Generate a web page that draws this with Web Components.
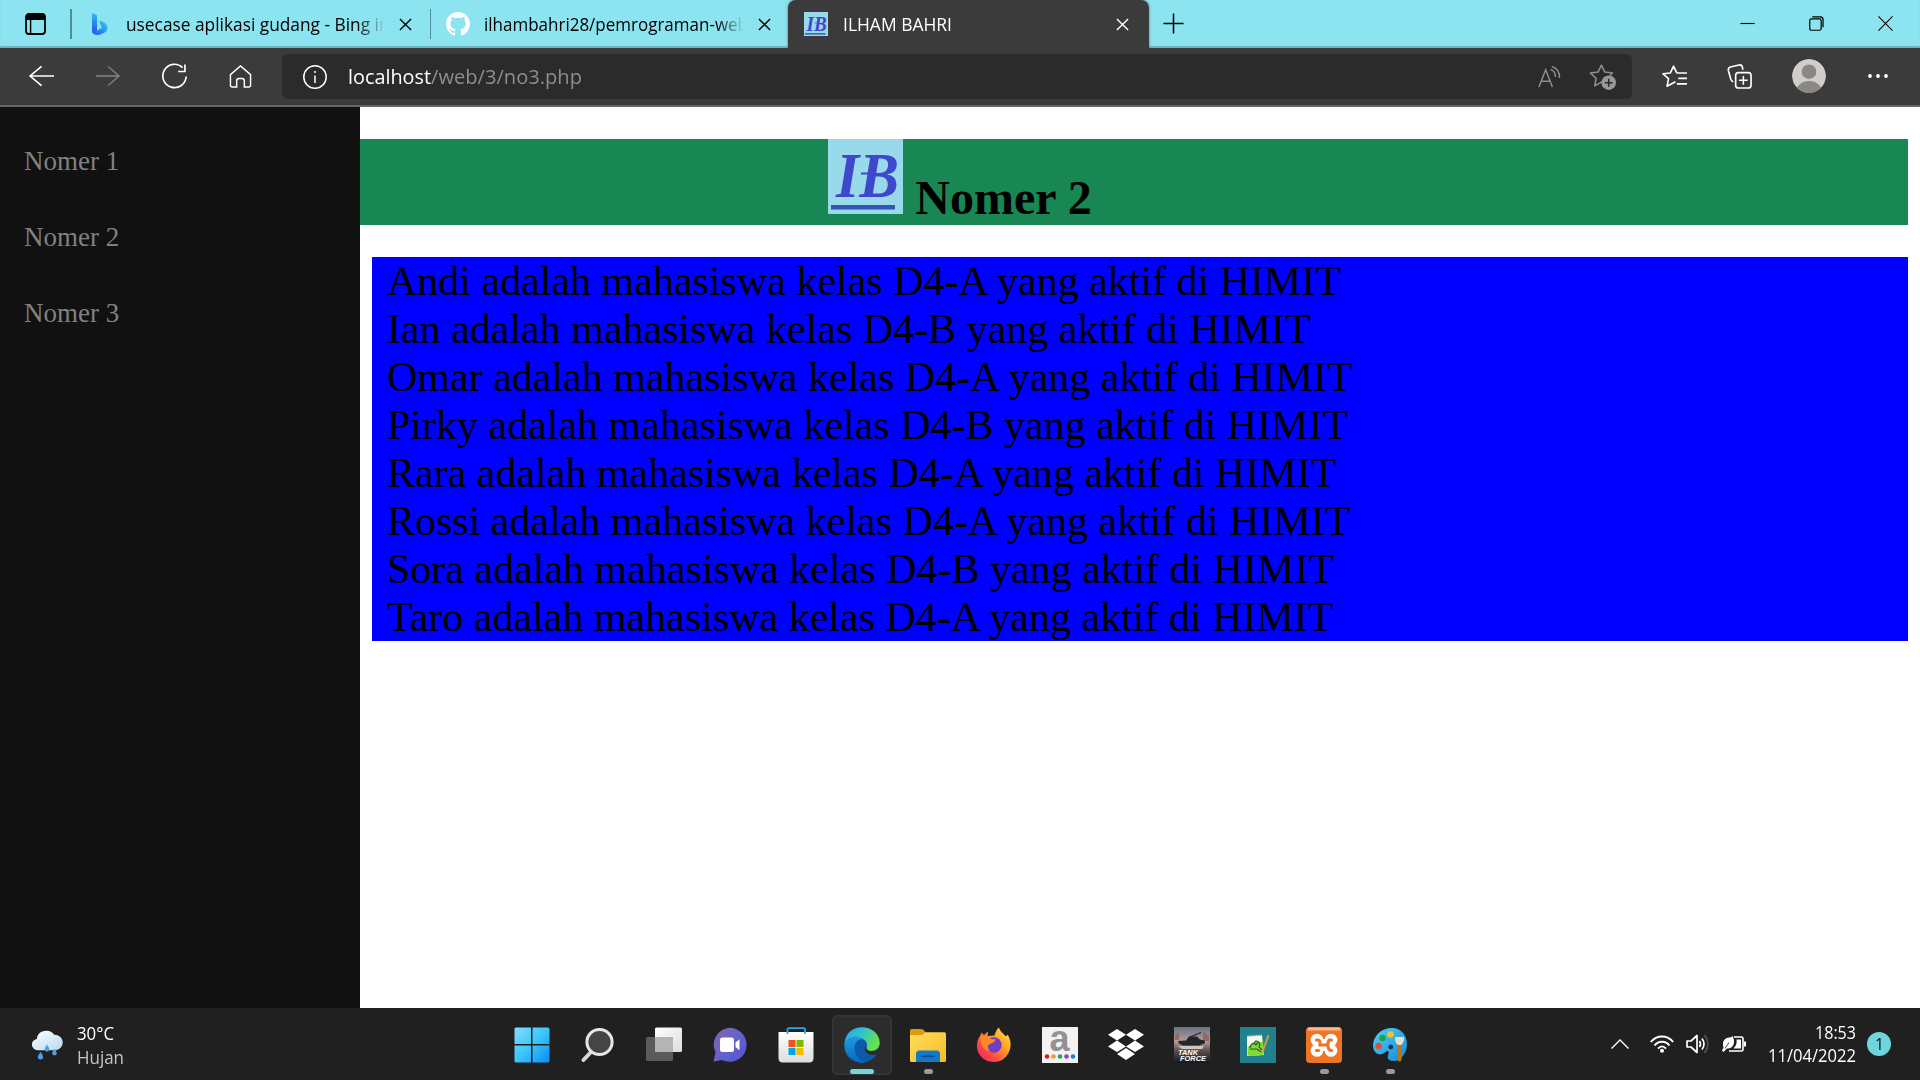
<!DOCTYPE html>
<html lang="id">
<head>
<meta charset="utf-8">
<title>ILHAM BAHRI</title>
<style>
html,body{margin:0;height:100%;overflow:hidden;background:#fff}
body{font-family:"Liberation Serif",serif}
</style>
</head>
<body>
<desktop-screen></desktop-screen>
<script>
const UI = 'font-family:"Open Sans","Noto Sans",sans-serif;';
const define = (name, html, ready) => {
  const t = document.createElement('template');
  t.innerHTML = html;
  customElements.define(name, class extends HTMLElement {
    constructor() { super(); this.attachShadow({mode: 'open'}).append(t.content.cloneNode(true)); }
    connectedCallback() { if (ready) ready(this, this.shadowRoot); }
  });
};

/* Text squeezed to a set width, keeping its height */
define('fit-text', `<style>:host{display:block;white-space:nowrap;${UI}}
span{display:inline-block;transform-origin:0 50%}</style><span><slot></slot></span>`, (el, root) => {
  const w = +el.getAttribute('w');
  el.style.width = w + 'px';
  const s = root.querySelector('span');
  s.style.transform = `scaleX(${w / s.getBoundingClientRect().width})`;
});

/* Line and colour icons */
const ICONS = {
  workspaces: ['0 0 24 24', '<rect x="3" y="2" width="19" height="20" rx="3" fill="none" stroke="#000" stroke-width="1.8"/><path d="M3 8V5q0-3 3-3h13q3 0 3 3v3z"/><path d="M7.6 8v14" stroke="#000" stroke-width="1.4"/>'],
  bing: ['0 0 24 24', '<defs><linearGradient id="a" x2="0" y2="1"><stop stop-color="#35b8f5"/><stop offset="1" stop-color="#2255e8"/></linearGradient><linearGradient id="b" x1="1" x2="0" y2="1"><stop stop-color="#32d3e8"/><stop offset="1" stop-color="#2058ea"/></linearGradient></defs><path d="M3 1l4 1.600q1 .5 1 1.600v14.500l-5 2z" fill="url(#a)"/><path d="M10.500 8.500c4 1 8 3 8 7.500 0 3.500-3.500 5-7 6.500-4 1.500-8.500 0-8.500-4 2 1.500 4.500 .5 6.500-.7l3.400-2-2-4.300z" fill="url(#b)"/>'],
  github: ['0 0 16 16', '<path fill="#fff" d="M8 0C3.580 0 0 3.580 0 8c0 3.540 2.290 6.530 5.470 7.590.4.070.55-.17.55-.38 0-.19-.01-.82-.01-1.490-2.010.37-2.530-.49-2.690-.94-.09-.23-.48-.94-.82-1.130-.28-.15-.68-.52-.01-.53.63-.01 1.080.58 1.230.82.72 1.210 1.870.87 2.330.66.070-.52.28-.87.51-1.070-1.780-.2-3.640-.89-3.640-3.950 0-.87.31-1.590.82-2.150-.08-.2-.36-1.020.08-2.120 0 0 .67-.21 2.200.82a7.400 7.400 0 0 1 4 0c1.530-1.040 2.200-.82 2.200-.82.44 1.100.16 1.920.08 2.120.51.56.82 1.270.82 2.150 0 3.070-1.870 3.750-3.650 3.950.29.25.54.73.54 1.480 0 1.070-.01 1.930-.01 2.200 0 .21.15.46.55.38A8.010 8.010 0 0 0 16 8c0-4.420-3.580-8-8-8z"/>'],
  close: ['0 0 14 14', '<path d="M1 1l12 12M13 1L1 13" stroke="currentColor" stroke-width="1.500"/>'],
  plus: ['0 0 22 22', '<path d="M11 .5v21M.5 11h21" stroke="#000" stroke-width="1.600"/>'],
  minimize: ['0 0 16 16', '<path d="M.5 8h15" stroke="#000" stroke-width="1.200"/>'],
  restore: ['0 0 16 16', '<rect x=".8" y="3" width="12.200" height="12.200" rx="2" fill="none" stroke="#000" stroke-width="1.300"/><path d="M3.500 1h8.500q3 0 3 3v8" fill="none" stroke="#000" stroke-width="1.300"/>'],
  winclose: ['0 0 16 16', '<path d="M.5 .5l15 15M15.500 .5l-15 15" stroke="#000" stroke-width="1.100"/>'],
  back: ['0 0 24 24', '<path d="M24 12H1M12 1.500L1 12l11 10.500" fill="none" stroke="#fff" stroke-width="1.600"/>'],
  forward: ['0 0 24 24', '<path d="M0 12h23M12 1.500L23 12 12 22.500" fill="none" stroke="#858585" stroke-width="1.500"/>'],
  reload: ['0 0 24 24', '<path d="M19.800 3.400A11.200 11.200 0 1 0 23.200 12M22 .5v6.700h-6.500" fill="none" stroke="#fff" stroke-width="1.600"/>'],
  home: ['0 0 24 24', '<path d="M1.500 10L12 1l10.500 9v11.500q0 1.500-1.500 1.500h-5v-6.500q0-2.500-2.500-2.500h-3q-2.500 0-2.500 2.500V23H3q-1.500 0-1.500-1.500z" fill="none" stroke="#fff" stroke-width="1.500"/>'],
  info: ['0 0 24 24', '<circle cx="12" cy="12" r="11.200" fill="none" stroke="#fff" stroke-width="1.500"/><path d="M12 10.500V18" stroke="#fff" stroke-width="1.500"/><circle cx="12" cy="7" r="1"  fill="#fff"/>'],
  read: ['0 0 24 24', '<path d="M1 23L8 5l7 18M3.500 17h9M13 4.500c3 1 5.200 4 5.300 8M14.500 1.500c5 1.500 8 6 8 12" fill="none" stroke="#8f8f8f" stroke-width="1.500"/>'],
  staradd: ['0 0 26 26', '<path d="M14 19.500L12 18.400 5.500 22l1.300-7.300L1.300 9.600l7.400-.9L12 2l3.300 6.700 7.400.9-2.500 2.400" fill="none" stroke="#8f8f8f" stroke-width="1.500" stroke-linejoin="round"/><circle cx="19" cy="19" r="7" fill="#999"/><path d="M19 15.200v7.600M15.200 19h7.600" stroke="#2b2b2b" stroke-width="1.500"/>'],
  favs: ['0 0 26 26', '<path d="M15.300 9.300l-3.300-7-3.300 7-7.600.9 5.700 5.100-1.500 7.800L12 19.500l2-1" fill="none" stroke="#fff" stroke-width="1.700" stroke-linejoin="round"/><path d="M15 9.300H26M17 15h9M15.500 20.600H26" stroke="#fff" stroke-width="1.700"/>'],
  collections: ['0 0 26 26', '<rect x="9" y="9" width="16" height="16" rx="3" fill="none" stroke="#fff" stroke-width="1.700"/><path d="M17 12.500v9M12.500 17h9" stroke="#fff" stroke-width="1.600"/><path d="M6.500 18.500q-2-.7-2.500-2.500L1.500 7q-.7-3 2-3.800L12.500 1q3-.5 3.500 2.300l.5 2.700" fill="none" stroke="#fff" stroke-width="1.700"/>'],
  avatar: ['0 0 34 34', '<clipPath id="c"><circle cx="17" cy="17" r="17"/></clipPath><g clip-path="url(#c)"><circle cx="17" cy="17" r="17" fill="#d0cecb"/><circle cx="17" cy="12.700" r="7.300" fill="#8b8785"/><ellipse cx="17" cy="33" rx="13" ry="11" fill="#8b8785"/></g>'],
  dots: ['0 0 20 4', '<g fill="#fff"><circle cx="2" cy="2" r="1.900"/><circle cx="10" cy="2" r="1.900"/><circle cx="18" cy="2" r="1.900"/></g>'],
  weather: ['0 0 32 32', '<defs><linearGradient id="w" x2="1" y2="1"><stop stop-color="#fff"/><stop offset="1" stop-color="#b5d9f2"/></linearGradient></defs><path d="M6.500 21.500a6 6 0 0 1-.7-11.900 9.500 9.500 0 0 1 17.400-4.500 8.200 8.200 0 0 1 .8 16.400z" fill="url(#w)"/><path d="M9.500 23.500c-4 5-3 8 0 8s4-3 0-8M16 15.500c-3.500 5-2.500 7.500 0 7.500s3.500-2.500 0-7.500M23.500 20c-3.500 4.500-2.500 7 0 7s3.500-2.500 0-7" fill="#4e9fe8"/>'],
  start: ['0 0 36 36', '<defs><linearGradient id="s" x2="1" y2="1"><stop stop-color="#86dcff"/><stop offset=".5" stop-color="#3cc5fb"/><stop offset="1" stop-color="#0a8cf5"/></linearGradient></defs><path d="M2 .5h15v16.500H.5V2Q.5.5 2 .5M18.500.5H34q1.500 0 1.500 1.500v15h-17zM.5 18.500H17v17H2Q.5 35.500.5 34zM18.500 18.500h17V34q0 1.500-1.500 1.500H18.500z" fill="url(#s)"/>'],
  search: ['0 0 36 36', '<path d="M11 25l-7.500 8" stroke="#d8d8d8" stroke-width="4" stroke-linecap="round"/><circle cx="19.500" cy="15" r="12.600" fill="#454545" stroke="#e6e6e6" stroke-width="3"/>'],
  taskview: ['0 0 36 36', '<defs><linearGradient id="t" x2="1" y2="1"><stop stop-color="#fff"/><stop offset="1" stop-color="#dcdcdc"/></linearGradient></defs><rect x="9" y=".5" width="27" height="24.500" rx="1.500" fill="url(#t)"/><rect y="10" width="27" height="24" rx="1.500" fill="#5b5b5b"/><path d="M9 10h16.500q1.500 0 1.500 1.500V25H9z" fill="#b4b4b4"/>'],
  chat: ['0 0 36 36', '<defs><linearGradient id="h" x2="1" y2="1"><stop stop-color="#8b62a8"/><stop offset=".5" stop-color="#6462cd"/><stop offset="1" stop-color="#5255d2"/></linearGradient></defs><path d="M18 .8A17 17 0 1 1 10 33l-8.500 1.500 2-9A17 17 0 0 1 18 .8" fill="url(#h)"/><rect x="8" y="10.500" width="14" height="14.500" rx="2.500" fill="#fff"/><path d="M23.500 15.500l4-3.300v11l-4-3.300z" fill="#fff"/>'],
  store: ['0 0 36 36', '<defs><linearGradient id="m" x2="0" y2="1"><stop stop-color="#fff"/><stop offset="1" stop-color="#ddd"/></linearGradient></defs><path d="M.5 5h35v26q0 4.500-4.500 4.500H5Q.5 35.500.5 31z" fill="url(#m)"/><path d="M9.500 7V2.500Q9.500 1.200 11 1.200h14.500q1.500 0 1.500 1.300V7" fill="none" stroke="#28a8ea" stroke-width="1.800"/><path d="M10.500 13h7v7h-7z" fill="#f1511b"/><path d="M18.500 13h7v7h-7z" fill="#80b900"/><path d="M10.500 21h7v7h-7z" fill="#00a4ef"/><path d="M18.500 21h7v7h-7z" fill="#fbb900"/>'],
  edge: ['0 0 36 36', '<defs><linearGradient id="e" x1="0" x2="1" y2=".4"><stop stop-color="#25a9e8"/><stop offset=".5" stop-color="#2fc3d0"/><stop offset="1" stop-color="#68e14d"/></linearGradient><linearGradient id="f" x2="0" y2="1"><stop stop-color="#1b9de2"/><stop offset="1" stop-color="#0967c4"/></linearGradient></defs><circle cx="18" cy="18" r="17.500" fill="#0d5aa8"/><path d="M.5 16C2 5.500 9 .3 18 .3c10 0 17.700 7 17.700 15.300 0 5.500-4 8.500-8.500 8.500-3.500 0-6-1.500-5-3 2.500-3.500 0-9-6-9.800C9 10.500 2.500 12 .5 16" fill="url(#e)"/><path d="M.5 15.500C3.500 9 13 7.500 19 12c-6 0-9 4.500-8.500 10.500C11 28.500 15 33.500 21.500 35.500 9 37.500-.8 28 .5 15.500" fill="url(#f)"/><path d="M36 20v9l-2.300-1.800c-2 1-7 1.300-10-.7-3-1.800-3.800-4.500-1.800-7.500 0 3 2.500 5 6 5 3 0 6-1.500 8.100-4" fill="#2c2c2c"/>'],
  explorer: ['0 0 36 36', '<defs><linearGradient id="x" x2="1" y2="1"><stop stop-color="#ffdc5e"/><stop offset="1" stop-color="#f7bd23"/></linearGradient></defs><path d="M0 12V3.500Q0 2 1.500 2H11q1.500 0 2.500 1l2 2v7z" fill="#d99a0c"/><path d="M0 8h11q1.500 0 2.500-1l1.500-1.800h19.500Q36 5.200 36 7v27q0 1-1.500 1h-33Q0 35 0 34z" fill="url(#x)"/><path d="M6 35v-8q0-3.500 3.500-3.500h17Q30 23.500 30 27v8z" fill="#1278c8"/><path d="M11 29.200h14" stroke="#06498a" stroke-width="1.500"/>'],
  firefox: ['0 0 36 36', '<defs><linearGradient id="r" x1="1" x2="0" y2="1"><stop stop-color="#fff04a"/><stop offset=".4" stop-color="#ff9b22"/><stop offset=".7" stop-color="#ff4745"/><stop offset="1" stop-color="#e91a75"/></linearGradient></defs><path d="M4 9l1.500-3.500L8 8l4-3.500-.5 4.500 7-.5c1-4 3-7 4.500-8 1 4 4 5.500 6.500 8.500 1 .5 2-1 2-1.500 4 6 4 13 1 18.500A17 17 0 0 1 2 25C0 19 1 13 4 9" fill="url(#r)"/><circle cx="18" cy="18" r="7.700" fill="#743dc6"/><path d="M4.500 10c3-1.500 6-1 8 1 2 1.500 5 1 7 1.500-1 3.500-4 3.500-6.500 5-2 1.500-1 4.500 1 6.500-6 0-10-6-9.500-14" fill="#ff8a27"/>'],
  letter: ['0 0 36 36', '<path d="M0 0h36v36H0z" fill="#f2f2f2"/><text x="7.500" y="23.500" font-family="Liberation Sans,sans-serif" font-weight="bold" font-size="36" fill="#929292">a</text><circle cx="5" cy="29.500" r="2.300" fill="#e01920"/><circle cx="11.500" cy="29.500" r="2.300" fill="#f19a24"/><circle cx="18" cy="29.500" r="2.300" fill="#22a75a"/><circle cx="24.500" cy="29.500" r="2.300" fill="#8843c7"/><circle cx="31" cy="29.500" r="2.300" fill="#1980cd"/>'],
  dropbox: ['0 0 36 36', '<path fill="#fff" d="M9 2l9 5.800-9 5.800-9-5.800zM27 2l9 5.800-9 5.800-9-5.800zM9 13.600l9 5.800-9 5.600-9-5.600zM27 13.600l9 5.800-9 5.600-9-5.600zM18 21l9 6-9 6-9-6z"/>'],
  tank: ['0 0 36 36', '<defs><linearGradient id="k" x2="0" y2="1"><stop stop-color="#677487"/><stop offset=".4" stop-color="#b69c94"/><stop offset=".65" stop-color="#5a5254"/><stop offset="1" stop-color="#16171b"/></linearGradient></defs><path d="M0 0h36v36H0z" fill="url(#k)"/><path d="M1 8l4-3v8H1zM29 4l6 5v6l-6-2z" fill="#8f6a68"/><path d="M4 14l8-.5 3-4h8l3 3 5 1v2.500l-6 2.500H9l-4-2z" fill="#21272d"/><path d="M16 10L27 5.500" stroke="#21272d" stroke-width="1.300"/><path d="M4 19h26l-2 3H8z" fill="#d0c4bd"/><g fill="#fff" font-family="Liberation Sans,sans-serif" font-weight="bold" font-style="italic" font-size="7"><text x="4" y="28" textLength="20" lengthAdjust="spacingAndGlyphs">TANK</text><text x="6" y="34" textLength="26" lengthAdjust="spacingAndGlyphs">FORCE</text></g>'],
  notepad: ['0 0 36 36', '<path d="M0 0h36v36H0z" fill="#21818d"/><path d="M7 9l15-1 2 20-17 1z" fill="#f4f8ee"/><path d="M7.500 20q8-6 15.500-5l1 12.500q-8 2-16.500 1z" fill="#83d936"/><path d="M7 9l15-1" stroke="#999" stroke-width="1.500" stroke-dasharray="1.500 1"/><path d="M10 21c1-5 4-6 6-3 2-5 5-1 3 2l3 3M10 22h7l4 3M13 17l3-3 3 1" fill="none" stroke="#2d5b25" stroke-width="1.200"/><path d="M28.500 8l-6 17" stroke="#dd9a38" stroke-width="2"/>'],
  xampp: ['0 0 36 36', '<rect width="36" height="36" rx="4" fill="#ef7526"/><path d="M3 .5h30q1.500 0 1.500 3h-33q0-3 1.500-3" fill="#ffb68a"/><g fill="#fff"><circle cx="11" cy="13" r="6.300"/><circle cx="25" cy="13" r="6.300"/><circle cx="11" cy="23.500" r="6.300"/><circle cx="25" cy="23.500" r="6.300"/><path d="M9 12h18v12H9z"/></g><path d="M18 6v5.500M18 25v5.500" stroke="#ef7526" stroke-width="2"/><g fill="none" stroke="#ef7526" stroke-width="3.200" stroke-linecap="round"><path d="M10.500 13h1.500q2.500 0 2 5h8M25.500 13h-2q-2 2-1.500 5M25.500 23.500q-3.500 0-3.500-5M10.500 23.500h2"/></g>'],
  paint: ['0 0 36 36', '<defs><linearGradient id="p" x2="1" y2="1"><stop stop-color="#4fd0fa"/><stop offset="1" stop-color="#1587d8"/></linearGradient></defs><path d="M1 19C1 9 9 1 20 1c9 0 15 7 15 16 0 10-7 17-13 17-7 0-7-4-5.500-7 1-3-1-4-3-2-3 3-7 3-9.500 1Q1 23 1 19" fill="url(#p)"/><circle cx="18.800" cy="20" r="2.400" fill="#16334a"/><circle cx="6.500" cy="19" r="3.200" fill="#dc5035"/><circle cx="10.500" cy="11" r="3.200" fill="#28a038"/><circle cx="18.500" cy="7.500" r="3.200" fill="#f8c31f"/><path d="M25.500 17h4v16q-2 3-4 0z" fill="#b97518"/><path d="M23 10h9v3q-1 4-3 5h-3q-2-1-3-5z" fill="#eadcc5"/>'],
  up: ['0 0 18 10', '<path d="M.5 9.500L9 1l8.500 8.500" fill="none" stroke="#fff" stroke-width="1.400"/>'],
  wifi: ['0 0 24 18', '<path d="M.8 7c6-7.300 16.400-7.300 22.400 0M4.500 10.500c4-5 11-5 15 0M8 13.600c2.500-3 5.500-3 8 0" fill="none" stroke="#fff" stroke-width="1.900"/><circle cx="12" cy="15.700" r="2" fill="#fff"/>'],
  volume: ['0 0 24 20', '<path d="M1 7h4l6-5.500v17L5 13H1z" fill="none" stroke="#fff" stroke-width="1.700" stroke-linejoin="round"/><path d="M13.500 7q2 3 0 6M16 4.500q4 5.500 0 11" fill="none" stroke="#fff" stroke-width="1.700"/><path d="M18.500 1q7 9 0 18" fill="none" stroke="#555" stroke-width="1.600"/>'],
  battery: ['0 0 24 18', '<path d="M12 2h7.500q1.500 0 1.500 2v10q0 2-1.500 2H7" fill="none" stroke="#fff" stroke-width="1.600"/><path d="M22 6.500h2v5h-2zM14.500 4.500H19v9h-7.500q4-4 3-9" fill="#fff"/><path d="M10.500 1c3 5 2 13-5.500 12.500L1.500 17 0 15.500l1.500-3C-.5 6 3.500 2.500 7 2.500q2 0 3.500-1.500" fill="#fff"/><path d="M3 13.500L7 7.500" stroke="#202020" stroke-width=".8"/>']
};
define('app-icon', `<style>:host{display:block;flex:none}svg{display:block;width:100%;height:100%;overflow:visible}</style>`, (el, root) => {
  const [box, art] = ICONS[el.getAttribute('name')];
  const w = el.getAttribute('w'), h = el.getAttribute('h') || w;
  el.style.width = w + 'px'; el.style.height = h + 'px';
  root.innerHTML += `<svg viewBox="${box}" preserveAspectRatio="none">${art}</svg>`;
});

/* IB logo */
define('ib-logo', `<style>:host{display:inline-block}svg{display:block;width:100%;height:100%}</style>
<svg viewBox="0 0 75 75"><path d="M0 0h75v75H0z" fill="#98d9ea"/>
<text x="8" y="58" textLength="63" lengthAdjust="spacingAndGlyphs" font-family="Liberation Serif,serif" font-weight="bold" font-style="italic" font-size="64" fill="#3f48cc">IB</text>
<path d="M33 34.500h16" stroke="#3f48cc" stroke-width="2"/><path d="M3 68.300h64" stroke="#3455b4" stroke-width="4.500"/></svg>`);

define('browser-tab', `<style>
:host{display:flex;align-items:center;box-sizing:border-box;height:48px;color:#000;font-size:18px;line-height:24px;flex:none}
.t{flex:1;overflow:hidden;min-width:0}
:host([fade]) .t{-webkit-mask-image:linear-gradient(90deg,#000 calc(100% - 28px),transparent);mask-image:linear-gradient(90deg,#000 calc(100% - 28px),transparent)}
:host([active]){background:#3b3b3b;color:#fff;border-radius:8px 8px 0 0;box-shadow:0 0 3px #2228}
app-icon{margin-top:1px}
</style><slot name="icon"></slot><div class="t"><slot></slot></div><app-icon name="close" w="13"></app-icon>`);

define('tab-strip', `<style>
:host{display:flex;height:48px;background:#8ce4f0;align-items:center;box-shadow:inset 0 -2px 1px #6db3bc}
.ws{padding:0 23px 0 23px}.sep{width:1.500px;height:30px;background:#4f8e98;flex:none}
.a{width:358px;padding:0 18px 1px 17px}.b{width:357px;padding:0 17px 1px 15px}.c{width:361px;padding:0 20px 1px 16px}
.a [slot]{margin-right:13px}.b [slot]{margin-right:14px}.c ib-logo{width:24px;height:24px;margin-right:15px}
.n{margin:0 0 2px 14px}.s{flex:1}.win{display:flex;align-items:center;gap:54px;padding:0 27px 1px 0}
.a,.b{--gap:14px}
</style>
<app-icon class="ws" name="workspaces" w="24"></app-icon><div class="sep"></div>
<browser-tab class="a" fade><app-icon slot="icon" name="bing" w="24"></app-icon><fit-text w="306">usecase aplikasi gudang - Bing images</fit-text></browser-tab>
<div class="sep"></div>
<browser-tab class="b" fade><app-icon slot="icon" name="github" w="24"></app-icon><fit-text w="264">ilhambahri28/pemrograman-web</fit-text></browser-tab>
<browser-tab class="c" active><ib-logo slot="icon"></ib-logo><fit-text w="109">ILHAM BAHRI</fit-text></browser-tab>
<app-icon class="n" name="plus" w="21"></app-icon><div class="s"></div>
<div class="win"><app-icon name="minimize" w="15"></app-icon><app-icon name="restore" w="15"></app-icon><app-icon name="winclose" w="15"></app-icon></div>`, (el, root) => {
  for (const tab of root.querySelectorAll('[fade]')) tab.shadowRoot.querySelector('.t').style.marginRight = '14px';
});

define('tool-bar', `<style>
:host{display:flex;align-items:center;height:57px;background:#3b3b3b;border-bottom:2px solid #666;box-sizing:content-box}
.nav{display:flex;align-items:center;gap:42px;width:253px;padding:0 0 1px 29px;flex:none}
.addr{display:flex;align-items:center;width:1350px;height:45px;box-sizing:border-box;padding:0 16px 0 21px;background:#2b2b2b;border-radius:6px;font-size:20.500px;line-height:30px}
.url{display:flex;margin:0 0 2px 21px;flex:1;color:#8e8e8e}.host{color:#fff}
.addr app-icon+app-icon{margin-left:28px}
.r{display:flex;align-items:center;padding:0 0 1px 30px;flex:1}
</style>
<div class="nav"><app-icon name="back" w="25" h="22"></app-icon><app-icon name="forward" w="24" h="22"></app-icon><app-icon name="reload" w="25"></app-icon><app-icon name="home" w="23"></app-icon></div>
<div class="addr"><app-icon name="info" w="24"></app-icon><div class="url"><fit-text class="host" w="83">localhost</fit-text><fit-text w="151">/web/3/no3.php</fit-text></div><app-icon name="read" w="23"></app-icon><app-icon name="staradd" w="27"></app-icon></div>
<div class="r"><app-icon name="favs" w="25"></app-icon><app-icon name="collections" w="25" style="margin-left:40px"></app-icon><app-icon name="avatar" w="34" style="margin-left:40px"></app-icon><app-icon name="dots" w="20" h="4" style="margin-left:42px"></app-icon></div>`);

define('side-nav', `<style>
:host{display:flex;flex-direction:column;box-sizing:border-box;width:360px;flex:none;background:#111;padding:39px 24px;gap:46px;font-size:27px;line-height:30px;color:#818181}
</style><slot></slot>`);

define('page-content', `<style>
:host{display:block;flex:1;box-sizing:border-box;padding:32px 12px 0 0;background:#fff;color:#000}
h1{margin:0 0 32px;height:86px;box-sizing:border-box;padding-right:348px;background:#198754;font-size:48px;line-height:55px;text-align:center;white-space:nowrap}
ib-logo{width:75px;height:75px;vertical-align:baseline}
.list{margin-left:12px;padding-left:15px;background:#00f;font-size:42px;line-height:48px;white-space:nowrap}
</style><h1><ib-logo></ib-logo> Nomer 2</h1><div class="list"></div>`, (el, root) => {
  const rows = [['Andi','A'],['Ian','B'],['Omar','A'],['Pirky','B'],['Rara','A'],['Rossi','A'],['Sora','B'],['Taro','A']];
  for (const [name, cls] of rows) {
    const d = document.createElement('div');
    d.textContent = `${name} adalah mahasiswa kelas D4-${cls} yang aktif di HIMIT`;
    root.querySelector('.list').append(d);
  }
});

define('task-item', `<style>
:host{display:flex;box-sizing:border-box;width:60px;height:60px;border-radius:6px;padding-top:12px;flex-direction:column;align-items:center;flex:none}
i{width:9px;height:5px;border-radius:3px;background:#9a9a9a;margin-top:6px;display:none}
:host([open]) i{display:block}
:host([active]){background:#2c2c2c;box-shadow:inset 0 0 0 1.500px #383838}
:host([active]) i{display:block;width:24px;background:#72d5d8}
</style><slot></slot><i></i>`);

define('task-bar', `<style>
:host{display:flex;height:72px;background:#202020;color:#fff;font-size:18px;line-height:24px}
.w{display:flex;align-items:center;width:471px;padding:2px 0 0 31px;gap:14px}
.g{color:#c4c4c4}
.m{display:flex;gap:6px;padding-top:7px;width:888px}
.r{display:flex;align-items:center;flex:1;padding-left:221px}
.clock{display:flex;flex-direction:column;align-items:flex-end;margin-left:22px;line-height:23px}
.badge{display:flex;align-items:center;justify-content:center;width:24px;height:24px;border-radius:50%;background:#6ed5dc;color:#111;font-size:17px;margin-left:11px}
</style>
<div class="w"><app-icon name="weather" w="32" h="30"></app-icon><div><fit-text w="37">30°C</fit-text><fit-text class="g" w="47">Hujan</fit-text></div></div>
<div class="m"></div>
<div class="r"><app-icon name="up" w="18" h="10"></app-icon><app-icon name="wifi" w="24" h="18" style="margin-left:21px"></app-icon><app-icon name="volume" w="24" h="20" style="margin-left:12px"></app-icon><app-icon name="battery" w="24" h="18" style="margin-left:12px"></app-icon>
<div class="clock"><fit-text w="41">18:53</fit-text><fit-text w="88">11/04/2022</fit-text></div><div class="badge"><fit-text w="9">1</fit-text></div></div>`, (el, root) => {
  const items = ['start','search','taskview','chat','store','edge','explorer','firefox','letter','dropbox','tank','notepad','xampp','paint'];
  root.querySelector('.m').innerHTML = items.map(n => `<task-item ${n === 'edge' ? 'active' : ''} ${['explorer','xampp','paint'].includes(n) ? 'open' : ''}><app-icon name="${n}" w="36"></app-icon></task-item>`).join('');
});

define('desktop-screen', `<style>
:host{display:flex;flex-direction:column;width:1920px;height:1080px;overflow:hidden}
main{display:flex;flex:1;min-height:0}
</style><tab-strip></tab-strip><tool-bar></tool-bar>
<main><side-nav><div>Nomer 1</div><div>Nomer 2</div><div>Nomer 3</div></side-nav><page-content></page-content></main><task-bar></task-bar>`);
</script>
</body>
</html>
